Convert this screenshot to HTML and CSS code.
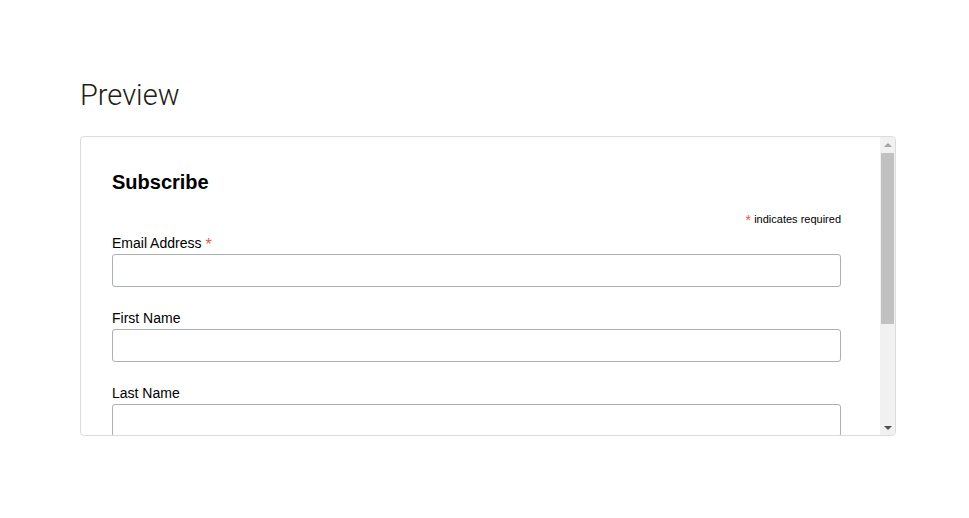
FILE: index.html
```html
<!DOCTYPE html>
<html lang="en">
<head>
    <meta charset="UTF-8">
    <meta name="viewport" content="width=device-width, initial-scale=1.0">
    <title>Preview</title>
    <link rel="stylesheet" href="styles.css">
</head>
<body>
    <div class="page">
        <h1 class="page-title">Preview</h1>
        <div class="preview-box">
            <div class="preview-content">
                <form class="signup-form">
                    <h2>Subscribe</h2>
                    <div class="required-note"><span class="asterisk">*</span> indicates required</div>
                    <div class="field">
                        <label for="email">Email Address <span class="asterisk">*</span></label>
                        <input type="email" id="email">
                    </div>
                    <div class="field">
                        <label for="fname">First Name</label>
                        <input type="text" id="fname">
                    </div>
                    <div class="field">
                        <label for="lname">Last Name</label>
                        <input type="text" id="lname">
                    </div>
                </form>
            </div>
            <div class="scrollbar">
                <div class="scroll-btn up"></div>
                <div class="scroll-thumb"></div>
                <div class="scroll-track"></div>
                <div class="scroll-btn down"></div>
            </div>
        </div>
    </div>
</body>
</html>
```

FILE: styles.css
```css
body {
    margin: 0;
    padding: 0;
    background: #fff;
    font-family: "Liberation Sans", Arial, sans-serif;
    color: #000;
}

.page {
    padding: 77px 0 0 80px;
}

.page-title {
    margin: 0 0 23px 0;
    font-family: Roboto, "Liberation Sans", sans-serif;
    font-weight: 300;
    font-size: 29px;
    line-height: 36px;
    color: #241c15;
}

.preview-box {
    width: 814px;
    height: 298px;
    border: 1px solid #dcdcdc;
    border-radius: 4px;
    display: flex;
    overflow: hidden;
}

.preview-content {
    flex: 1;
    overflow: hidden;
    padding: 33px 39px 0 31px;
}

h2 {
    margin: 0 0 18px 0;
    font-size: 20px;
    line-height: 24px;
    font-weight: bold;
}

.required-note {
    text-align: right;
    font-size: 11px;
    line-height: 14px;
    margin-bottom: 8px;
}

.required-note .asterisk {
    color: #e85c41;
    font-size: 130%;
    position: relative;
    top: 2px;
    line-height: 0;
}

.field {
    margin-bottom: 22px;
}

.field label {
    display: block;
    font-size: 14px;
    line-height: 18px;
    margin-bottom: 2px;
}

.field .asterisk {
    color: #e85c41;
    font-size: 16px;
    line-height: 0;
    position: relative;
    top: 2px;
}

.field input {
    display: block;
    box-sizing: border-box;
    width: 100%;
    height: 33px;
    border: 1px solid #abb0b2;
    border-radius: 3px;
    padding: 0 8px;
    background: #fff;
}

.scrollbar {
    width: 15px;
    background: #f1f1f1;
    display: flex;
    flex-direction: column;
}

.scroll-btn {
    height: 15px;
    display: flex;
    align-items: center;
    justify-content: center;
}

.scroll-btn.up::before {
    content: "";
    border-left: 4px solid transparent;
    border-right: 4px solid transparent;
    border-bottom: 4px solid #a3a3a3;
}

.scroll-btn.down::before {
    content: "";
    border-left: 4px solid transparent;
    border-right: 4px solid transparent;
    border-top: 4px solid #505050;
}

.scroll-thumb {
    height: 171px;
    margin: 1px 1px 0 1px;
    background: #c1c1c1;
}

.scroll-track {
    flex: 1;
}
```
